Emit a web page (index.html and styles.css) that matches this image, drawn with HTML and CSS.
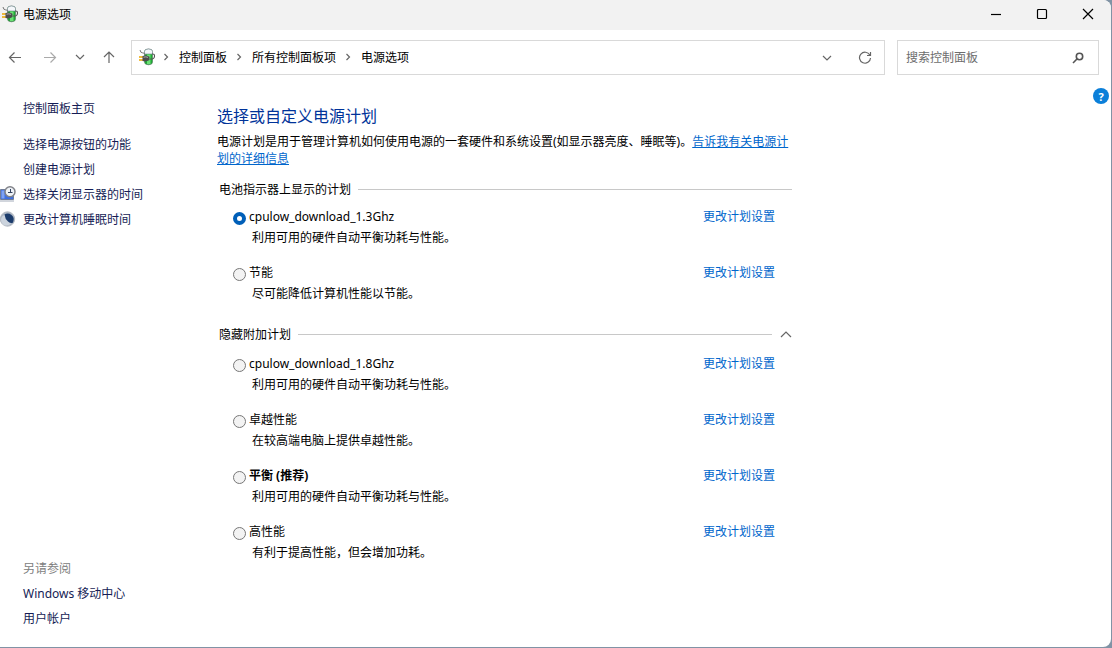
FILE: index.html
```html
<!DOCTYPE html>
<html lang="zh-CN">
<head>
	<meta charset="UTF-8">
	<title>电源选项</title>
	<link rel="stylesheet" href="styles.css">
</head>
<body>
	<svg width="0" height="0" class="symbols">
		<!-- 电池和插头 -->
		<symbol id="power" viewBox="0 0 18 18">
			<path d="M6.500 3.500Q6.500 1 10.500 1t4 2.500V14q0 2.800-4 2.800T6.500 14z" fill="#1faa35" stroke="#54705c" stroke-width=".6"/>
			<path d="M6.500 6V3.500Q6.500 1 10.500 1t4 2.500V6z" fill="#f4f7fa" stroke="#8794a0" stroke-width=".7"/>
			<path d="M9 6.500h3.500v9.500H9z" fill="#6be074"/>
			<path d="M2 2q.5 3 2.500 2.800T7.500 7" fill="none" stroke="#777" stroke-width="1"/>
			<path d="M14 6q2.800-.5 2.500 2.500T12 11" fill="none" stroke="#555" stroke-width="1.100"/>
			<path d="M1 9h4M1 12h4" stroke="#eda800" stroke-width="1.500"/>
			<path d="M4.500 8q4-1.200 7 .8V12q-3 2.200-7 1z" fill="#4c4c4c"/>
			<path d="M5.500 9.200q2.500-.8 4.500.2" fill="none" stroke="#aaa" stroke-width="1"/>
		</symbol>
	</svg>
	<div class="window">
		<div class="titlebar">
			<svg class="power"><use href="#power"/></svg>
			<span class="caption">电源选项</span>
			<button class="winbtn" aria-label="最小化"><svg width="12" height="12"><path d="M1 6.500h10"/></svg></button>
			<button class="winbtn" aria-label="最大化"><svg width="12" height="12"><rect x="1.500" y="1.500" width="9" height="9" rx="1"/></svg></button>
			<button class="winbtn" aria-label="关闭"><svg width="12" height="12"><path d="M1 1l10 10M11 1L1 11"/></svg></button>
		</div>
		<div class="toolbar">
			<div class="nav">
				<button aria-label="后退"><svg width="14" height="14"><path d="M13 6.500H1.500M6.500 1.500l-5 5 5 5"/></svg></button>
				<button class="forward" aria-label="前进"><svg width="14" height="14"><path d="M1 6.500h11.500M7.500 1.500l5 5-5 5"/></svg></button>
				<button class="recent" aria-label="最近位置"><svg width="10" height="10"><path d="M1 2l4 4 4-4"/></svg></button>
				<button aria-label="向上"><svg width="14" height="14"><path d="M7 12V1M2 6l5-5 5 5"/></svg></button>
			</div>
			<div class="address">
				<svg class="power"><use href="#power"/></svg>
				<svg class="sep" width="6" height="8"><path d="M1.500 1L4.500 4l-3 3"/></svg>
				<a href="#">控制面板</a>
				<svg class="sep" width="6" height="8"><path d="M1.500 1L4.500 4l-3 3"/></svg>
				<a href="#">所有控制面板项</a>
				<svg class="sep" width="6" height="8"><path d="M1.500 1L4.500 4l-3 3"/></svg>
				<a href="#">电源选项</a>
				<div class="tools">
					<button aria-label="展开"><svg width="10" height="10"><path d="M1 4l4 4 4-4"/></svg></button>
					<button aria-label="刷新"><svg width="14" height="14"><path d="M11.800 5A5.500 5.500 0 1 0 12.500 8M12.500 2v3.500H9"/></svg></button>
				</div>
			</div>
			<div class="search">
				<input type="text" placeholder="搜索控制面板" aria-label="搜索控制面板">
				<button aria-label="搜索"><svg width="12" height="12"><circle cx="7.500" cy="4.500" r="3.200"/><path d="M5.200 6.800L1 11"/></svg></button>
			</div>
		</div>
		<div class="body">
			<div class="sidebar">
				<a class="home" href="#">控制面板主页</a>
				<a href="#">选择电源按钮的功能</a>
				<a href="#">创建电源计划</a>
				<div class="task">
					<svg width="16" height="16">
						<path d="M.5 3.500h13v10H.5z" fill="#3f6fe0" stroke="#6f7c98"/>
						<path d="M0 15h14" fill="none" stroke="#a4acba"/>
						<path d="M1.500 4.500h3v8h-3z" fill="#7fa2f2"/>
						<circle cx="10" cy="5.800" r="5" fill="#eef2f7" stroke="#808288" stroke-width="1.500"/>
						<path d="M10.500 3v3.500M8 6.500h4.500" fill="none" stroke="#33425e"/>
					</svg>
					<a href="#">选择关闭显示器的时间</a>
				</div>
				<div class="task">
					<svg width="16" height="16">
						<circle cx="7.500" cy="8" r="7.200" fill="#aab4c2" stroke="#b4bac2"/>
						<circle cx="6.500" cy="9" r="5.500" fill="#ccd4de"/>
						<path d="M4.500 3.500Q8 1.500 11.500 4t1.500 7.500q-2 1.500-5-1t-3.500-7z" fill="#1c3c6c"/>
					</svg>
					<a href="#">更改计算机睡眠时间</a>
				</div>
				<div class="seealso">
					<span>另请参阅</span>
					<a href="#">Windows 移动中心</a>
					<a href="#">用户帐户</a>
				</div>
			</div>
			<div class="main">
				<h1>选择或自定义电源计划</h1>
				<p class="intro">电源计划是用于管理计算机如何使用电源的一套硬件和系统设置(如显示器亮度、睡眠等)。<a href="#">告诉我有关电源计划的详细信息</a></p>

				<h2>电池指示器上显示的计划</h2>
				<div class="plans">
					<div class="plan">
						<input type="radio" name="plan" id="plan1" checked>
						<label for="plan1">cpulow_download_1.3Ghz</label>
						<a href="#">更改计划设置</a>
						<p>利用可用的硬件自动平衡功耗与性能。</p>
					</div>
					<div class="plan">
						<input type="radio" name="plan" id="plan2">
						<label for="plan2">节能</label>
						<a href="#">更改计划设置</a>
						<p>尽可能降低计算机性能以节能。</p>
					</div>
				</div>

				<h2 class="more">隐藏附加计划<button aria-label="隐藏附加计划"><svg width="12" height="8"><path d="M1 6l5-5 5 5"/></svg></button></h2>
				<div class="plans extra">
					<div class="plan">
						<input type="radio" name="plan" id="plan3">
						<label for="plan3">cpulow_download_1.8Ghz</label>
						<a href="#">更改计划设置</a>
						<p>利用可用的硬件自动平衡功耗与性能。</p>
					</div>
					<div class="plan">
						<input type="radio" name="plan" id="plan4">
						<label for="plan4">卓越性能</label>
						<a href="#">更改计划设置</a>
						<p>在较高端电脑上提供卓越性能。</p>
					</div>
					<div class="plan">
						<input type="radio" name="plan" id="plan5">
						<label for="plan5" class="recommend">平衡 (推荐)</label>
						<a href="#">更改计划设置</a>
						<p>利用可用的硬件自动平衡功耗与性能。</p>
					</div>
					<div class="plan">
						<input type="radio" name="plan" id="plan6">
						<label for="plan6">高性能</label>
						<a href="#">更改计划设置</a>
						<p>有利于提高性能，但会增加功耗。</p>
					</div>
				</div>
			</div>
			<button class="help" aria-label="帮助">?</button>
		</div>
	</div>
</body>
</html>
```
FILE: styles.css
```css
*{
	box-sizing:border-box;
	margin:0;
	padding:0;
}

body{
	background:#8193a5;
	color:#000;
	font-family:"Noto Sans","Noto Sans CJK SC",sans-serif;
	font-size:12px;
	line-height:17px;
}

a{
	color:#0066cc;
	text-decoration:none;
}

a:hover{
	text-decoration:underline;
}

button{
	display:flex;
	align-items:center;
	justify-content:center;
	border:0;
	background:none;
}

button svg,.sep{
	fill:none;
	stroke:#666;
	stroke-width:1.2;
}

.symbols{
	position:absolute;
}

.power{
	flex:none;
	width:18px;
	height:18px;
}

.window{
	display:flex;
	flex-direction:column;
	min-height:calc(100vh - 1px);
	margin:0 1px 1px 0;
	border-radius:0 8px 8px 0;
	background:#fff;
	overflow:hidden;
}

/*标题栏*/
.titlebar{
	display:flex;
	align-items:center;
	height:30px;
	padding:0 0 2px 1px;
	background:#f2f2f2;
}

.caption{
	flex:1;
	padding-left:4px;
}

.winbtn{
	width:46px;
	height:28px;
}

.winbtn svg{
	stroke:#000;
}

/*地址栏*/
.toolbar{
	display:flex;
	padding:10px 12px 0 0;
}

.nav{
	display:flex;
	width:131px;
	height:35px;
}

.nav button{
	width:30px;
}

.nav .forward{
	width:40px;
}

.nav .forward svg{
	stroke:#aaa;
}

.nav .recent{
	width:20px;
}

.nav button:last-child{
	width:38px;
}

.address{
	display:flex;
	flex:1;
	align-items:center;
	height:35px;
	padding:0 0 1px 6px;
	border:1px solid #d9d9d9;
}

.address a{
	color:#000;
}

.sep{
	margin:0 10px 0 9px;
}

.address .sep:nth-of-type(2){
	margin-left:7px;
}

.tools{
	display:flex;
	margin-left:auto;
}

.tools button{
	width:38px;
	height:33px;
}

.search{
	display:flex;
	width:202px;
	height:35px;
	margin-left:12px;
	border:1px solid #d9d9d9;
}

.search input{
	flex:1;
	min-width:0;
	padding-left:8px;
	border:0;
	outline:0;
	font:inherit;
}

.search input::placeholder{
	color:#6d6d6d;
}

.search button{
	width:40px;
}

.search svg{
	stroke:#555;
	stroke-width:1.6;
}

.body{
	display:flex;
	flex:1;
	align-items:flex-start;
}

/*左侧任务*/
.sidebar{
	display:flex;
	flex-direction:column;
	align-self:stretch;
	gap:8px;
	width:217px;
	padding:25px 0 20px 23px;
}

.sidebar a{
	color:#151c55;
}

.sidebar .home{
	margin-bottom:11px;
}

.task{
	display:flex;
	gap:7px;
	margin-left:-23px;
}

.seealso{
	display:flex;
	flex-direction:column;
	gap:8px;
	margin-top:auto;
}

.seealso span{
	color:#808080;
}

/*电源计划*/
.main{
	flex:0 1 575px;
	padding-top:30px;
}

h1{
	margin-bottom:6px;
	color:#003399;
	font-size:16px;
	font-weight:normal;
	line-height:22px;
}

.intro a{
	text-decoration:underline;
}

h2{
	display:flex;
	align-items:center;
	margin-top:14px;
	padding-left:2px;
	font-size:12px;
	font-weight:normal;
}

h2:after{
	content:"";
	flex:1;
	height:1px;
	margin-left:7px;
	background:#c8c8c8;
}

.more{
	margin-top:24px;
}

.more button{
	order:1;
	margin-left:8px;
}

.plans{
	display:grid;
	gap:18px;
	padding:10px 17px 0 16px;
}

.extra{
	padding-top:12px;
}

.plan{
	display:grid;
	grid-template-columns:16px 1fr auto;
	row-gap:4px;
	align-items:center;
}

.plan input{
	appearance:none;
	width:13px;
	height:13px;
	margin-top:4px;
	border:1px solid #777;
	border-radius:50%;
	background:#f3f3f3;
}

.plan input:checked{
	border:4px solid #005fb8;
	background:#fff;
}

.plan p{
	grid-column:1 / -1;
	padding-left:19px;
}

.recommend{
	font-weight:bold;
}

.help{
	width:16px;
	height:16px;
	margin:13px 2px 0 auto;
	border-radius:50%;
	background:#0b7fd9;
	color:#fff;
	font-family:"Noto Sans",sans-serif;
	font-size:11px;
	font-weight:bold;
}
```
